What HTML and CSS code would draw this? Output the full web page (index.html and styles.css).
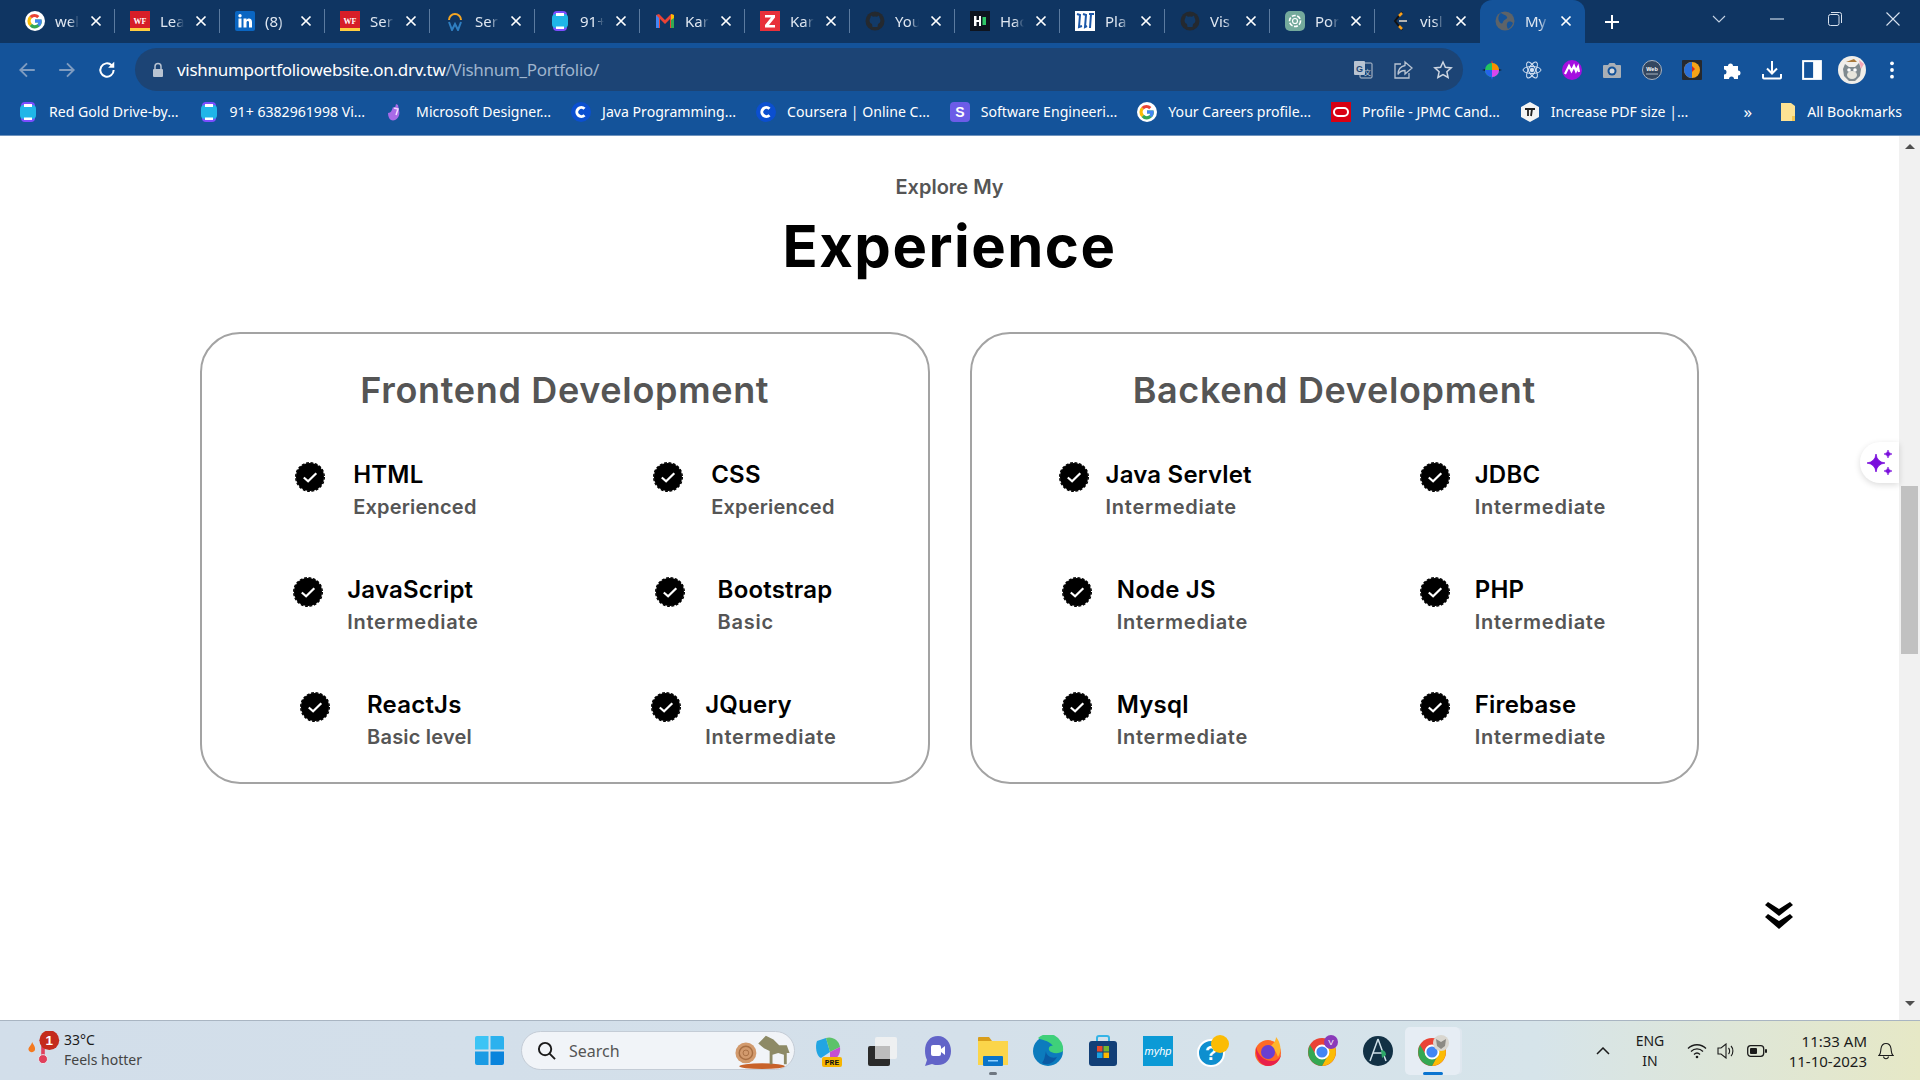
FILE: index.html
```html
<!DOCTYPE html>
<html lang="en">
<head>
<meta charset="utf-8">
<title>Vishnu M Portfolio</title>
<link rel="stylesheet" href="styles.css">
</head>
<body>
<svg class="defs" width="0" height="0" aria-hidden="true">
  <defs>
    <symbol id="i-g" viewBox="0 0 20 20"><circle cx="10" cy="10" r="10" fill="#fff"/><path d="M16.5 8.5H10v3h3.6a3.9 3.9 0 0 1-6.7 1.2L4.5 15a7 7 0 0 0 12-6.500z" fill="#34a853"/><path d="M4.500 15l2.400-2.300a3.900 3.900 0 0 1 0-5.400L4.500 5a7 7 0 0 0 0 10z" fill="#fbbc05"/><path d="M4.500 5l2.400 2.300a3.900 3.900 0 0 1 5.300-.1L14.400 5a7 7 0 0 0-9.900 0z" fill="#ea4335"/><path d="M16.500 8.500H10v3h3.600c-.2.800-.7 1.500-1.300 2l2.200 1.800c1.800-1.700 2.500-4.200 2-6.800z" fill="#4285f4"/></symbol>
    <symbol id="i-wf" viewBox="0 0 20 20"><rect width="20" height="20" fill="#d71e28"/><rect y="17" width="20" height="3" fill="#ffcd41"/><text x="10" y="12.500" font-size="8" font-weight="700" font-family="Liberation Serif" fill="#fff" text-anchor="middle">WF</text></symbol>
    <symbol id="i-wa" viewBox="0 0 20 20"><rect x="3" y="0" width="14" height="20" rx="4" fill="#7c4dff"/><rect x="2" y="3" width="16" height="14" rx="4" fill="#1fb6e8"/><rect x="6" y="2" width="8" height="3" fill="#fff"/><rect x="6" y="15.500" width="8" height="2.500" fill="#fff"/></symbol>
    <symbol id="i-gh" viewBox="0 0 20 20"><circle cx="10" cy="10" r="9.500" fill="#24292f"/><path d="M6 4.500l2 1.200a8 8 0 0 1 4 0l2-1.200.6 2.500c1.400 2 1 5-1.600 6l-.5 3h-5l-.5-3c-2.600-1-3-4-1.600-6z" fill="#123a68"/></symbol>
    <symbol id="i-c" viewBox="0 0 20 20"><circle cx="10" cy="10" r="10" fill="#0b4fd0"/><path d="M13.500 6.800a4.500 4.500 0 1 0 0 6.400" fill="none" stroke="#fff" stroke-width="3"/></symbol>
    <symbol id="i-check" viewBox="0 0 30 30"><circle cx="15" cy="15" r="14" fill="#000"/><circle cx="15" cy="15" r="14.300" fill="none" stroke="#000" stroke-width="1.400" stroke-dasharray="2.800 1.700"/><path d="M8.800 15.500l4.300 3.800 8.200-8" fill="none" stroke="#fff" stroke-width="2.200"/></symbol>
    <symbol id="i-x" viewBox="0 0 12 12"><path d="M1.500 1.500l9 9m0-9l-9 9" stroke="#fff" stroke-width="1.700" fill="none"/></symbol>
  </defs>
</svg>

<header class="chrome">
  <div class="tabstrip">
    <div class="tab"><svg class="fav"><use href="#i-g"/></svg><span class="tab-title">wel</span><svg class="tab-x"><use href="#i-x"/></svg></div>
    <div class="tab"><svg class="fav"><use href="#i-wf"/></svg><span class="tab-title">Lea</span><svg class="tab-x"><use href="#i-x"/></svg></div>
    <div class="tab"><svg class="fav" viewBox="0 0 20 20"><rect width="20" height="20" rx="2" fill="#0a66c2"/><rect x="3.500" y="7.500" width="3" height="9" fill="#fff"/><circle cx="5" cy="4.800" r="1.700" fill="#fff"/><path d="M8.500 7.500h3v1.500c1.500-2.300 5.500-2 5.500 2v5.500h-3v-5c0-2-2.500-2-2.500 0v5h-3z" fill="#fff"/></svg><span class="tab-title">(8)</span><svg class="tab-x"><use href="#i-x"/></svg></div>
    <div class="tab"><svg class="fav"><use href="#i-wf"/></svg><span class="tab-title">Ser</span><svg class="tab-x"><use href="#i-x"/></svg></div>
    <div class="tab"><svg class="fav" viewBox="0 0 20 20"><path d="M3 9a7 7 0 0 1 14 0h-2a5 5 0 0 0-10 0z" fill="#f5a623"/><path d="M4 11l3 8 3-6 3 6 3-8" fill="none" stroke="#2f7fc1" stroke-width="2"/></svg><span class="tab-title">Ser</span><svg class="tab-x"><use href="#i-x"/></svg></div>
    <div class="tab"><svg class="fav"><use href="#i-wa"/></svg><span class="tab-title">91+</span><svg class="tab-x"><use href="#i-x"/></svg></div>
    <div class="tab"><svg class="fav" viewBox="0 0 20 20"><path d="M1 17V4l3-1 6 6 6-6 3 1v13h-4V8l-5 5-5-5v9z" fill="#ea4335"/><path d="M1 4v13h3V7z" fill="#4285f4"/><path d="M19 4v13h-3V7z" fill="#34a853"/><path d="M16 3l3 1v3l-3 2z" fill="#fbbc05"/></svg><span class="tab-title">Kar</span><svg class="tab-x"><use href="#i-x"/></svg></div>
    <div class="tab"><svg class="fav" viewBox="0 0 20 20"><rect width="20" height="20" fill="#e8303a"/><path d="M5 4h10v2.500L9 14h6v2.500H5V14l6-7.500H5z" fill="#fff"/></svg><span class="tab-title">Kar</span><svg class="tab-x"><use href="#i-x"/></svg></div>
    <div class="tab"><svg class="fav"><use href="#i-gh"/></svg><span class="tab-title">You</span><svg class="tab-x"><use href="#i-x"/></svg></div>
    <div class="tab"><svg class="fav" viewBox="0 0 20 20"><rect width="20" height="20" fill="#0e141e"/><path d="M4 5h2.500v4h2.500V5h2v10H9v-4H6.500v4H4z" fill="#fff"/><rect x="12.500" y="6" width="3.500" height="8" fill="#2ec866"/></svg><span class="tab-title">Hac</span><svg class="tab-x"><use href="#i-x"/></svg></div>
    <div class="tab"><svg class="fav" viewBox="0 0 20 20"><rect width="20" height="20" fill="#fff"/><path d="M2 3l3 1-1 12 3-1M8 3l3 1-1 12 2-1M14 3h5m-3 0l-1 14" fill="none" stroke="#1a56a8" stroke-width="2"/></svg><span class="tab-title">Pla</span><svg class="tab-x"><use href="#i-x"/></svg></div>
    <div class="tab"><svg class="fav"><use href="#i-gh"/></svg><span class="tab-title">Vis</span><svg class="tab-x"><use href="#i-x"/></svg></div>
    <div class="tab"><svg class="fav" viewBox="0 0 20 20"><rect width="20" height="20" rx="5" fill="#74aa9c"/><circle cx="10" cy="10" r="5.500" fill="none" stroke="#fff" stroke-width="1.600" stroke-dasharray="4 1.500"/><circle cx="10" cy="10" r="2.500" fill="none" stroke="#fff" stroke-width="1.200"/></svg><span class="tab-title">Por</span><svg class="tab-x"><use href="#i-x"/></svg></div>
    <div class="tab"><svg class="fav" viewBox="0 0 20 20"><path d="M12 1L5 10l7 9" fill="none" stroke="#111" stroke-width="2"/><path d="M9 5l3-3M9 15l3 3" stroke="#f89f1b" stroke-width="2.500"/><path d="M9 10h8" stroke="#b3b3b3" stroke-width="2"/></svg><span class="tab-title">visl</span><svg class="tab-x"><use href="#i-x"/></svg></div>
    <div class="tab tab-active"><svg class="fav" viewBox="0 0 20 20"><circle cx="10" cy="10" r="9.500" fill="#5d6368"/><path d="M6 2c3 2 5 2 6 4s-3 2-4 5-3 1-4-1-1-6 2-8zM13 11c2-1 4 0 5 1-1 3-3 5-5 6-1-2-2-5 0-7z" fill="#14539a"/></svg><span class="tab-title">My</span><svg class="tab-x"><use href="#i-x"/></svg></div>
    <svg class="newtab" viewBox="0 0 16 16"><path d="M8 1v14M1 8h14" stroke="#fff" stroke-width="2"/></svg>
    <svg class="tab-menu" viewBox="0 0 14 8"><path d="M1 1l6 6 6-6" fill="none" stroke="#c5d3e4" stroke-width="1.100"/></svg>
    <div class="winctl">
      <svg viewBox="0 0 14 14"><path d="M0 7h14" stroke="#d8e2ee" stroke-width="1.100"/></svg>
      <svg viewBox="0 0 14 14"><rect x=".5" y="2.500" width="10.500" height="11" rx="2" fill="none" stroke="#d8e2ee"/><path d="M3 .5h8.500a2 2 0 0 1 2 2V11" fill="none" stroke="#d8e2ee"/></svg>
      <svg viewBox="0 0 14 14"><path d="M.5.500l13 13m0-13l-13 13" stroke="#d8e2ee" stroke-width="1.100"/></svg>
    </div>
  </div>

  <div class="toolbar">
    <button class="tb"><svg viewBox="0 0 18 18"><path d="M16 9H3m6-6L3 9l6 6" fill="none" stroke="#7f9cc0" stroke-width="1.700"/></svg></button>
    <button class="tb"><svg viewBox="0 0 18 18"><path d="M2 9h13M9 3l6 6-6 6" fill="none" stroke="#7f9cc0" stroke-width="1.700"/></svg></button>
    <button class="tb"><svg viewBox="0 0 18 18"><path d="M15 9a6 6 0 1 1-1.800-4.300" fill="none" stroke="#fff" stroke-width="1.800"/><path d="M15.500 1.500v5.500H10z" fill="#fff"/></svg></button>
    <div class="omnibox">
      <svg class="lock" viewBox="0 0 12 16"><path d="M3 7V4.500a3 3 0 0 1 6 0V7" fill="none" stroke="#b9c4d2" stroke-width="1.500"/><rect x="1" y="7" width="10" height="8" rx="1" fill="#b9c4d2"/></svg>
      <span class="url"><span class="url-host">vishnumportfoliowebsite.on.drv.tw</span>/Vishnum_Portfolio/</span>
      <svg class="omni-ic" viewBox="0 0 20 20"><rect x="7" y="3" width="12" height="15" rx="1" fill="none" stroke="#b9c4d2"/><rect x="1" y="1" width="11" height="14" rx="1" fill="#b9c4d2"/><text x="6.500" y="11.500" font-size="9" font-weight="700" font-family="Liberation Sans" fill="#1c4475" text-anchor="middle">G</text><text x="14.500" y="14.500" font-size="7" font-family="Noto Sans CJK SC" fill="#b9c4d2" text-anchor="middle">文</text></svg>
      <svg class="omni-ic" viewBox="0 0 20 20"><path d="M8 4H2v14h14v-5" fill="none" stroke="#b9c4d2" stroke-width="1.300"/><path d="M12 2l7 6-7 6v-3.500c-3.500 0-5.500 1-7 4 0-5 2.500-8 7-9z" fill="none" stroke="#b9c4d2" stroke-width="1.300"/></svg>
      <svg class="omni-ic" viewBox="0 0 20 20"><path d="M10 2l2.400 5.300 5.800.6-4.300 3.900 1.200 5.700L10 14.600l-5.100 2.900 1.200-5.700L1.800 7.900l5.800-.6z" fill="none" stroke="#cdd6e2" stroke-width="1.500"/></svg>
    </div>
    <div class="exts">
      <button class="tb"><svg viewBox="0 0 20 20"><path d="M10 0l2 8H8z" fill="#e8303a"/><path d="M10 20l-2-8h4z" fill="#2a5cff"/><path d="M0 10l8-2v4z" fill="#111"/><path d="M20 10l-8 2V8z" fill="#111"/><circle cx="10" cy="10" r="7" fill="#22c55e"/><path d="M10 3a7 7 0 0 1 7 7h-7z" fill="#fb8c00"/><path d="M10 10h7a7 7 0 0 1-7 7z" fill="#d946ef"/><path d="M10 10v7a7 7 0 0 1-7-7z" fill="#2563eb"/></svg></button>
      <button class="tb"><svg viewBox="0 0 20 20" fill="none" stroke="#d6e2f2"><ellipse cx="10" cy="10" rx="9" ry="3.500"/><ellipse cx="10" cy="10" rx="9" ry="3.500" transform="rotate(60 10 10)"/><ellipse cx="10" cy="10" rx="9" ry="3.500" transform="rotate(120 10 10)"/><circle cx="10" cy="10" r="1.800" fill="#d6e2f2"/></svg></button>
      <button class="tb"><svg viewBox="0 0 20 20"><circle cx="10" cy="10" r="10" fill="#a40fe0"/><path d="M3 14l4-8 2.500 5L12 6l2 5 2-4 1 5" fill="none" stroke="#fff" stroke-width="2.200"/></svg></button>
      <button class="tb"><svg viewBox="0 0 20 20"><path d="M2 5h4l1.500-2h5L14 5h4a1 1 0 0 1 1 1v11a1 1 0 0 1-1 1H2a1 1 0 0 1-1-1V6a1 1 0 0 1 1-1z" fill="#a9afb6"/><circle cx="10" cy="11" r="4.500" fill="#14539a"/><circle cx="10" cy="11" r="2.500" fill="#d5d9de"/></svg></button>
      <button class="tb"><svg viewBox="0 0 20 20"><circle cx="10" cy="10" r="9.500" fill="#33465f" stroke="#a9b3bf"/><rect x="3" y="7" width="14" height="5" fill="#33465f"/><text x="10" y="11" font-size="5.500" font-weight="700" font-family="Liberation Sans" fill="#fff" text-anchor="middle">Web</text><path d="M4 14h12" stroke="#a9b3bf"/></svg></button>
      <button class="tb"><svg viewBox="0 0 20 20"><rect width="20" height="20" rx="1" fill="#26292e"/><circle cx="10" cy="10" r="8" fill="#f5a418"/><path d="M10 2a8 8 0 0 0 0 16z" fill="#2a6fd6"/><path d="M10 6l3 3-3 3z" fill="#d3291f"/></svg></button>
      <button class="tb"><svg viewBox="0 0 20 20"><path d="M2 6h4a2.500 2.500 0 1 1 5 0h5v4.500a2.500 2.500 0 1 1 0 5V19h-4a2.500 2.500 0 1 0-5 0H2v-4.500a2.500 2.500 0 1 0 0-5z" fill="#fff"/></svg></button>
      <button class="tb"><svg viewBox="0 0 20 20"><path d="M10 1v12M5 8.500l5 5 5-5M1 14v3.500a1 1 0 0 0 1 1h16a1 1 0 0 0 1-1V14" fill="none" stroke="#fff" stroke-width="2"/></svg></button>
      <button class="tb"><svg viewBox="0 0 18 18"><rect x="1" y="1" width="16" height="16" fill="none" stroke="#fff" stroke-width="1.800"/><rect x="10" y="1" width="7" height="16" fill="#fff"/></svg></button>
      <button class="tb"><svg class="avatar" viewBox="0 0 28 28"><circle cx="14" cy="14" r="14" fill="#f0eeea"/><path d="M7 8l4 3h6l4-4 2 6-1 7-5 5H11l-5-5-1-7z" fill="#7f8a8f"/><ellipse cx="14" cy="19" rx="5" ry="4" fill="#e8e6dc"/><circle cx="11" cy="14" r="1.800" fill="#fff"/><circle cx="17" cy="14" r="1.800" fill="#fff"/><path d="M21 4l5 4-3 5z" fill="#f4a6b8"/><path d="M8 6l8-3 3 3z" fill="#a97a3c"/></svg></button>
      <button class="tb"><svg viewBox="0 0 4 18"><circle cx="2" cy="3" r="1.700" fill="#fff"/><circle cx="2" cy="9" r="1.700" fill="#fff"/><circle cx="2" cy="15" r="1.700" fill="#fff"/></svg></button>
    </div>
  </div>

  <div class="bookmarks">
    <a class="bm"><svg class="bm-ic"><use href="#i-wa"/></svg>Red Gold Drive-by...</a>
    <a class="bm"><svg class="bm-ic"><use href="#i-wa"/></svg>91+ 6382961998 Vi...</a>
    <a class="bm"><svg class="bm-ic" viewBox="0 0 20 20"><path d="M3 11c3 0 4-3 5-6l2 1 1-4 2 1 1 5c2 7-4 12-8 10-2-1-3-4-3-7z" fill="#a96be8"/><path d="M9 6l4 1-2 6" fill="none" stroke="#f3d9ff" stroke-width="1.500"/></svg>Microsoft Designer...</a>
    <a class="bm"><svg class="bm-ic"><use href="#i-c"/></svg>Java Programming...</a>
    <a class="bm"><svg class="bm-ic"><use href="#i-c"/></svg>Coursera | Online C...</a>
    <a class="bm"><svg class="bm-ic" viewBox="0 0 20 20"><rect width="20" height="20" rx="4" fill="#6c5ce7"/><text x="10" y="15" font-size="14" font-weight="700" font-family="Liberation Sans" fill="#fff" text-anchor="middle">S</text></svg>Software Engineeri...</a>
    <a class="bm"><svg class="bm-ic"><use href="#i-g"/></svg>Your Careers profile...</a>
    <a class="bm"><svg class="bm-ic" viewBox="0 0 20 20"><rect width="20" height="20" fill="#d80012"/><rect x="3" y="6" width="14" height="8" rx="4" fill="none" stroke="#fff" stroke-width="2"/></svg>Profile - JPMC Cand...</a>
    <a class="bm"><svg class="bm-ic" viewBox="0 0 20 20"><path d="M10 0l9 5v10l-9 5-9-5V5z" fill="#f4f4f4"/><path d="M5 7h10M8 7v7M12 7l-1 7" stroke="#222" stroke-width="1.800"/></svg>Increase PDF size |...</a>
    <span class="bm-more">»</span>
    <a class="bm bm-all"><svg class="bm-ic" viewBox="0 0 16 20"><path d="M1 1h10l4 3v15H1z" fill="#fde293"/><path d="M12 14h3v5h-3z" fill="#f4c64f"/></svg>All Bookmarks</a>
  </div>
</header>

<div class="viewport">
  <main class="page">
    <p class="eyebrow">Explore My</p>
    <h1 class="headline">Experience</h1>
    <div class="cards">
      <section class="card">
        <h2 class="card-title">Frontend Development</h2>
        <div class="skills">
          <article class="skill"><svg class="check"><use href="#i-check"/></svg><div><h3>HTML</h3><p class="tight">Experienced</p></div></article>
          <article class="skill"><svg class="check"><use href="#i-check"/></svg><div><h3>CSS</h3><p class="tight">Experienced</p></div></article>
          <article class="skill"><svg class="check"><use href="#i-check"/></svg><div><h3>JavaScript</h3><p>Intermediate</p></div></article>
          <article class="skill"><svg class="check"><use href="#i-check"/></svg><div><h3>Bootstrap</h3><p>Basic</p></div></article>
          <article class="skill"><svg class="check"><use href="#i-check"/></svg><div><h3>ReactJs</h3><p class="tight">Basic level</p></div></article>
          <article class="skill"><svg class="check"><use href="#i-check"/></svg><div><h3>JQuery</h3><p>Intermediate</p></div></article>
        </div>
      </section>
      <section class="card">
        <h2 class="card-title">Backend Development</h2>
        <div class="skills">
          <article class="skill"><svg class="check"><use href="#i-check"/></svg><div><h3>Java Servlet</h3><p>Intermediate</p></div></article>
          <article class="skill"><svg class="check"><use href="#i-check"/></svg><div><h3>JDBC</h3><p>Intermediate</p></div></article>
          <article class="skill"><svg class="check"><use href="#i-check"/></svg><div><h3>Node JS</h3><p>Intermediate</p></div></article>
          <article class="skill"><svg class="check"><use href="#i-check"/></svg><div><h3>PHP</h3><p>Intermediate</p></div></article>
          <article class="skill"><svg class="check"><use href="#i-check"/></svg><div><h3>Mysql</h3><p>Intermediate</p></div></article>
          <article class="skill"><svg class="check"><use href="#i-check"/></svg><div><h3>Firebase</h3><p>Intermediate</p></div></article>
        </div>
      </section>
    </div>
    <svg class="scroll-down" viewBox="0 0 28 28"><path d="M0 3l3-3 11 7 11-7 3 3-14 11z" fill="#000"/><path d="M0 15l3-3 11 7 11-7 3 3-14 12z" fill="#000"/></svg>
    <div class="spark-pill"><svg viewBox="0 0 26 26"><path d="M9 4Q10 12 18 13 10 14 9 22 8 14 0 13 8 12 9 4z" fill="#7a0fdc" stroke="#7a0fdc" stroke-width=".8"/><path d="M21 0Q21.500 3.500 25 4 21.500 4.500 21 8 20.500 4.500 17 4 20.500 3.500 21 0zM21 17Q21.500 20.500 25 21 21.500 21.500 21 25 20.500 21.500 17 21 20.500 20.500 21 17z" fill="#7a0fdc" stroke="#7a0fdc" stroke-width=".6"/></svg></div>
  </main>
  <aside class="scrollbar">
    <span class="sb-up"></span>
    <span class="sb-thumb"></span>
    <span class="sb-down"></span>
  </aside>
</div>

<footer class="taskbar">
  <div class="weather">
    <svg class="weather-ic" viewBox="0 0 40 44"><path d="M8 12c1 3 4 5 3 9-1 3-6 3-7 0-1-3 3-5 4-9z" fill="#f47a20"/><rect x="18" y="16" width="4" height="14" fill="#e0405c"/><circle cx="20" cy="31" r="5" fill="#e0405c" stroke="#e6ecf3"/><circle cx="27" cy="10" r="11" fill="#c42b1c"/><text x="27" y="15.500" font-size="15" font-weight="700" font-family="Liberation Sans" fill="#fff" text-anchor="middle">1</text></svg>
    <div class="weather-text"><span class="w-temp">33°C</span><span class="w-desc">Feels hotter</span></div>
  </div>
  <svg class="start" viewBox="0 0 29 29"><path d="M0 2a2 2 0 0 1 2-2h11.500v13.500H0z" fill="#3cc4f5"/><path d="M15.500 0H27a2 2 0 0 1 2 2v11.500H15.500z" fill="#2bb1ee"/><path d="M0 15.500h13.500V29H2a2 2 0 0 1-2-2z" fill="#1a9be4"/><path d="M15.500 15.500H29V27a2 2 0 0 1-2 2H15.500z" fill="#0a84dc"/></svg>
  <div class="search">
    <svg class="search-ic" viewBox="0 0 20 20"><circle cx="8.500" cy="8.500" r="6.500" fill="none" stroke="#1b1b1b" stroke-width="2"/><path d="M13 13l6 6" stroke="#1b1b1b" stroke-width="2"/></svg>
    <span class="search-text">Search</span>
    <svg class="search-art" viewBox="0 0 62 40"><ellipse cx="30" cy="36" rx="24" ry="3" fill="#c8622a"/><circle cx="13" cy="22" r="11" fill="#d29a6d"/><circle cx="13" cy="22" r="7" fill="none" stroke="#a86f43" stroke-width="1.500"/><circle cx="13" cy="22" r="3" fill="none" stroke="#a86f43"/><path d="M26 12l8-8 8 4 6 6 8 0 3 8h-3v12h-3V24l-6-2-6 2v10h-3V20l-6-3z" fill="#8d8a66"/></svg>
  </div>
  <div class="apps">
    <span class="app"><svg viewBox="0 0 32 32"><path d="M5 6l9-3 4 14-9 6c-5-2-6-12-4-17z" fill="#22a5e2"/><path d="M14 3c6-2 13 2 14 9l-10 5z" fill="#5dc26a"/><path d="M18 17l10-5c1 7-3 13-10 13z" fill="#c54fd0"/><rect x="10" y="22" width="20" height="10" rx="2" fill="#f7b500"/><text x="20" y="30" font-size="8" font-weight="700" font-family="Liberation Mono" fill="#111" text-anchor="middle">PRE</text></svg></span>
    <span class="app"><svg viewBox="0 0 32 32"><rect x="1" y="11" width="22" height="20" rx="2" fill="#2b2b2b"/><rect x="8" y="2" width="22" height="22" rx="2" fill="#f2f2f2" opacity=".85"/><rect x="8" y="11" width="15" height="13" fill="#bdbdbd"/></svg></span>
    <span class="app"><svg viewBox="0 0 32 32"><path d="M16 1C8 1 3 7 3 16c0 4 1 7 2 9l-2 6 7-2c2 1 4 1 6 1 8 0 13-6 13-14S24 1 16 1z" fill="#6264c8"/><rect x="9" y="10" width="10" height="11" rx="2" fill="#fff"/><path d="M19 14l4-3v9l-4-3z" fill="#fff"/></svg></span>
    <span class="app app-run"><svg viewBox="0 0 32 32"><path d="M1 3a1 1 0 0 1 1-1h10l3 4H1z" fill="#d99e1b"/><path d="M1 6h30v24H1z" fill="#fbd54a"/><rect x="6" y="21" width="20" height="10" rx="1" fill="#0a74c9"/><rect x="11" y="25" width="10" height="1.500" fill="#8fd0ff"/></svg></span>
    <span class="app"><svg viewBox="0 0 32 32"><circle cx="16" cy="16" r="15" fill="#0c7bbd"/><path d="M6 3a15 15 0 0 1 25 13c-3 3-12 3-14-1-1-3 2-5 4-4-4-6-13-6-15-8z" fill="#3fd07a"/><path d="M14 16c0 5 6 8 11 6-3 6-10 9-15 6 2-2 3-7 4-12z" fill="#0a5aa4"/></svg></span>
    <span class="app"><svg viewBox="0 0 32 32"><path d="M10 7V3a2 2 0 0 1 2-2h8a2 2 0 0 1 2 2v4" fill="none" stroke="#36b4e6" stroke-width="2"/><rect x="2" y="6" width="28" height="25" rx="3" fill="#123f77"/><rect x="10" y="11" width="5.500" height="5.500" fill="#e8492a"/><rect x="16.500" y="11" width="5.500" height="5.500" fill="#74b72e"/><rect x="10" y="17.500" width="5.500" height="5.500" fill="#1ba1e2"/><rect x="16.500" y="17.500" width="5.500" height="5.500" fill="#fbb900"/></svg></span>
    <span class="app"><svg viewBox="0 0 32 32"><rect width="30" height="30" x="1" y="1" fill="#0b9ad6"/><text x="16" y="20" font-size="11" font-style="italic" font-family="Liberation Sans" fill="#fff" text-anchor="middle">myhp</text></svg></span>
    <span class="app"><svg viewBox="0 0 32 32"><circle cx="14" cy="18" r="13" fill="#0e8fcf" stroke="#fff" stroke-width="2"/><text x="14" y="25" font-size="20" font-weight="700" font-family="Liberation Sans" fill="#fff" text-anchor="middle">?</text><circle cx="23" cy="9" r="9" fill="#fbbc05"/></svg></span>
    <span class="app"><svg viewBox="0 0 32 32"><circle cx="16" cy="18" r="13" fill="#ff6a25"/><path d="M24 2c5 6 6 14 2 20-2-6-4-8-8-10 3-3 6-6 6-10z" fill="#ffb52b"/><circle cx="16" cy="17" r="7" fill="#6a3fd0"/><path d="M4 12c2 8 8 14 16 14 4 0 7-2 9-6-2 8-8 11-13 11-7 0-13-7-12-19z" fill="#e8204b"/></svg></span>
    <span class="app"><svg viewBox="0 0 32 32"><circle cx="15" cy="17" r="14" fill="#ea4335"/><path d="M15 31a14 14 0 0 0 12-21H15l6 10z" fill="#fbbc05"/><path d="M3 10a14 14 0 0 0 12 21l6-11H9z" fill="#34a853"/><circle cx="15" cy="17" r="6.500" fill="#4285f4" stroke="#fff" stroke-width="1.800"/><circle cx="24" cy="7" r="7" fill="#8a3ab9"/><text x="24" y="10" font-size="8" font-family="Liberation Sans" fill="#fff" text-anchor="middle">V</text></svg></span>
    <span class="app"><svg viewBox="0 0 32 32"><circle cx="16" cy="16" r="15" fill="#123145"/><path d="M16 4L8 26M16 4l8 22M11 18h10" stroke="#cfe0e8" stroke-width="1.500" fill="none"/><path d="M19 15c4 0 5 3 5 5l-4 3z" fill="#2ea868"/></svg></span>
    <span class="app app-active"><svg viewBox="0 0 32 32"><circle cx="15" cy="17" r="14" fill="#ea4335"/><path d="M15 31a14 14 0 0 0 12-21H15l6 10z" fill="#fbbc05"/><path d="M3 10a14 14 0 0 0 12 21l6-11H9z" fill="#34a853"/><circle cx="15" cy="17" r="6.500" fill="#4285f4" stroke="#fff" stroke-width="1.800"/><circle cx="24" cy="8" r="8" fill="#d9d6cf"/><path d="M19 4l5 3 5-3-1 7-4 3-4-3z" fill="#8c8a84"/></svg></span>
  </div>
  <div class="tray">
    <svg class="tray-up" viewBox="0 0 14 8"><path d="M1 7l6-6 6 6" fill="none" stroke="#1b1b1b" stroke-width="1.500"/></svg>
    <div class="lang"><span>ENG</span><span>IN</span></div>
    <svg class="tray-ic" viewBox="0 0 20 16"><path d="M1 5.500c5-5 13-5 18 0M4 8.500c3.500-3.500 8.500-3.500 12 0M7 11.500c2-2 4-2 6 0" fill="none" stroke="#1b1b1b" stroke-width="1.300"/><circle cx="10" cy="14" r="1.300" fill="#1b1b1b"/></svg>
    <svg class="tray-ic" viewBox="0 0 20 16"><path d="M1 5h3l5-4v14l-5-4H1z" fill="none" stroke="#1b1b1b" stroke-width="1.100"/><path d="M11.500 5c1.500 1.500 1.500 4.500 0 6M14 3c2.500 2.500 2.500 7.500 0 10" fill="none" stroke="#1b1b1b" stroke-width="1.100"/></svg>
    <svg class="tray-ic" viewBox="0 0 20 16"><rect x=".7" y="2.700" width="16" height="10.600" rx="3" fill="none" stroke="#1b1b1b" stroke-width="1.300"/><rect x="3" y="5" width="7" height="6" rx="1" fill="#1b1b1b"/><rect x="18" y="6" width="2" height="4" rx="1" fill="#1b1b1b"/></svg>
    <div class="clock"><span>11:33 AM</span><span>11-10-2023</span></div>
    <svg class="bell" viewBox="0 0 16 18"><path d="M1 13.500c2-1.500 1.500-4 2-7 .5-3 2.500-5 5-5s4.500 2 5 5c.5 3 0 5.500 2 7z" fill="none" stroke="#1b1b1b" stroke-width="1.100"/><path d="M5.500 14.500c.5 3 4.500 3 5 0" fill="none" stroke="#1b1b1b" stroke-width="1.100"/></svg>
  </div>
</footer>
</body>
</html>
```

FILE: styles.css
```css
* { box-sizing: border-box; }
html, body { margin: 0; height: 100%; }
body {
  width: 1920px;
  height: 1080px;
  overflow: hidden;
  display: flex;
  flex-direction: column;
  background: #fff;
  font-family: "Inter", "Liberation Sans", sans-serif;
}
.defs { position: absolute; }
svg { display: block; }

/* browser chrome */
.chrome { font-family: "Noto Sans", "Open Sans", sans-serif; color: #fff; flex: none; }
.tabstrip {
  height: 43px;
  background: #0f3562;
  display: flex;
  align-items: flex-start;
  padding-left: 10px;
}
.tab {
  width: 105px;
  height: 24px;
  margin-top: 9px;
  display: flex;
  align-items: center;
  padding-left: 15px;
  border-right: 1px solid #5b7ba0;
}
.tab:has(+ .tab-active) { border-right-color: transparent; }
.tab-active {
  margin-top: 0;
  height: 43px;
  padding-bottom: 1px;
  border-right: 0;
  background: #14539a;
  border-radius: 12px 12px 0 0;
}
.fav { width: 20px; height: 20px; flex: none; }
.tab-title {
  width: 24px;
  margin-left: 10px;
  overflow: hidden;
  white-space: nowrap;
  font-size: 15px;
  color: #dfe7f1;
  -webkit-mask-image: linear-gradient(90deg, #000 60%, transparent);
  mask-image: linear-gradient(90deg, #000 60%, transparent);
}
.tab-x { width: 12px; height: 12px; margin-left: 11px; flex: none; }
.newtab { width: 16px; height: 16px; align-self: center; margin-left: 19px; }
.tab-menu { width: 14px; height: 8px; align-self: center; margin: -6px 0 0 92px; }
.winctl { display: flex; align-items: center; gap: 44px; align-self: center; margin: -5px 0 0 44px; }
.winctl svg { width: 14px; height: 14px; }

.toolbar { height: 53px; background: #14539a; display: flex; align-items: center; padding-left: 7px; }
.tb {
  width: 40px;
  height: 40px;
  padding: 0;
  border: 0;
  background: none;
  display: flex;
  align-items: center;
  justify-content: center;
}
.tb svg { width: 20px; height: 20px; }
.tb .avatar { width: 28px; height: 28px; }
.omnibox {
  width: 1328px;
  height: 43px;
  margin-left: 8px;
  border-radius: 22px;
  background: #1c4475;
  display: flex;
  align-items: center;
  padding-left: 17px;
}
.lock { width: 12px; height: 16px; flex: none; }
.url { margin-left: 13px; font-size: 17px; letter-spacing: -.3px; color: #9fb4cd; white-space: nowrap; flex: 1; }
.url-host { color: #fff; }
.omni-ic { width: 20px; height: 20px; margin-right: 20px; flex: none; }
.omni-ic:last-child { margin-right: 10px; }
.exts { display: flex; margin-left: 9px; }

.bookmarks {
  height: 40px;
  background: #14539a;
  border-bottom: 1px solid #6f93bd;
  display: flex;
  align-items: center;
  padding: 0 18px 8px 18px;
  font-size: 14.100px;
  white-space: nowrap;
}
.bm { display: flex; align-items: center; gap: 11px; margin-right: 20px; }
.bm-ic { width: 20px; height: 20px; flex: none; }
.bm-more { margin-left: auto; font-size: 17px; margin-right: 28px; }
.bm-all { margin-right: 0; }
.bm-all .bm-ic { width: 16px; }

/* page */
.viewport { flex: 1; min-height: 0; display: flex; position: relative; }
.page { flex: 1; position: relative; padding-top: 37px; min-width: 0; color: #000; }
.eyebrow {
  margin: 0;
  text-align: center;
  font-size: 20px;
  line-height: 28px;
  font-weight: 600;
  color: #555;
}
.headline {
  margin: 12px 0 52px;
  text-align: center;
  font-size: 58px;
  line-height: 67px;
  font-weight: 700;
  letter-spacing: 1.500px;
}
.cards { display: flex; justify-content: center; gap: 40px; }
.card {
  width: 729.500px;
  height: 452px;
  border: 2px solid #a3a3a3;
  border-radius: 40px;
  padding-top: 30px;
}
.card-title {
  margin: 0 0 43px;
  text-align: center;
  font-size: 36px;
  line-height: 52px;
  font-weight: 600;
  letter-spacing: .670px;
  color: #555;
}
.skills {
  display: grid;
  grid-template-columns: 210px 210px;
  column-gap: 148px;
  row-gap: 51px;
  justify-content: center;
}
.skill { display: flex; justify-content: space-around; width: 210px; height: 64px; }
.check { width: 30px; height: 30px; margin-top: 3px; flex: none; }
.skill h3 { margin: 0; font-size: 24px; line-height: 32px; font-weight: 600; letter-spacing: .2px; color: #000; white-space: nowrap; }
.skill p { margin: 0; font-size: 20px; line-height: 32px; font-weight: 600; letter-spacing: .75px; color: #555; white-space: nowrap; }
.skill p.tight { letter-spacing: .2px; }

.scroll-down { position: absolute; left: 1765px; top: 766px; width: 28px; height: 28px; }
.spark-pill {
  position: absolute;
  right: 0;
  top: 306px;
  width: 39px;
  height: 41px;
  background: #fff;
  border-radius: 20px 0 0 20px;
  box-shadow: 0 2px 6px rgba(0,0,0,.14);
  display: flex;
  align-items: center;
  padding-left: 7px;
}
.spark-pill svg { width: 26px; height: 26px; }

.scrollbar {
  width: 21px;
  background: #f1f1f1;
  display: flex;
  flex-direction: column;
  align-items: center;
  padding-top: 8px;
}
.sb-up, .sb-down { width: 0; height: 0; border-left: 5px solid transparent; border-right: 5px solid transparent; }
.sb-up { border-bottom: 5px solid #505050; }
.sb-down { border-top: 5px solid #505050; margin-top: 347px; }
.sb-thumb { width: 17px; height: 168px; background: #c1c1c1; margin-top: 337px; }

/* taskbar */
.taskbar {
  height: 60px;
  flex: none;
  display: flex;
  align-items: center;
  border-top: 1px solid #a9b5c2;
  background: linear-gradient(90deg, #d2deea 0%, #d4e0ea 50%, #d6e4ea 80%, #e6e8c6 100%);
  font-family: "Noto Sans", "Open Sans", sans-serif;
  font-size: 14px;
  color: #1b1b1b;
}
.weather { width: 475px; display: flex; align-items: center; padding-left: 25px; flex: none; }
.weather-ic { width: 36px; height: 40px; flex: none; }
.weather-text { display: flex; flex-direction: column; margin-left: 3px; line-height: 20px; margin-top: -2px; }
.w-desc { color: #444; }
.start { width: 29px; height: 29px; flex: none; }
.search {
  width: 274px;
  height: 39px;
  margin-left: 17px;
  border-radius: 20px;
  background: #f1f4f8;
  border: 1px solid #c4ccd6;
  display: flex;
  align-items: center;
  padding-left: 15px;
  flex: none;
}
.search-ic { width: 19px; height: 19px; flex: none; }
.search-text { margin-left: 13px; font-size: 16px; color: #555; flex: 1; }
.search-art { width: 62px; height: 38px; flex: none; }
.apps { display: flex; margin-left: 5px; flex: none; height: 100%; align-items: center; }
.app { width: 55px; height: 48px; display: flex; align-items: center; justify-content: center; position: relative; }
.app svg { width: 32px; height: 32px; }
.app-run::after, .app-active::after {
  content: "";
  position: absolute;
  bottom: 0;
  left: 50%;
  transform: translateX(-50%);
  border-radius: 2px;
  height: 3px;
}
.app-run::after { width: 8px; background: #6e7680; }
.app-active { background: #e6edf4; border-radius: 5px; box-shadow: 3px 0 0 -1px #dfe7ef; }
.app-active::after { width: 20px; background: #0a74d0; }
.tray { display: flex; align-items: center; margin-left: 136px; }
.tray-up { width: 14px; height: 8px; }
.lang { display: flex; flex-direction: column; align-items: center; margin-left: 23px; line-height: 20px; width: 34px; }
.tray-ic { width: 20px; height: 16px; margin-left: 10px; }
.lang + .tray-ic { margin-left: 20px; }
.clock { display: flex; flex-direction: column; align-items: flex-end; line-height: 20px; font-size: 15px; width: 90px; margin-left: 10px; white-space: nowrap; }
.bell { width: 16px; height: 18px; margin-left: 11px; }
```
